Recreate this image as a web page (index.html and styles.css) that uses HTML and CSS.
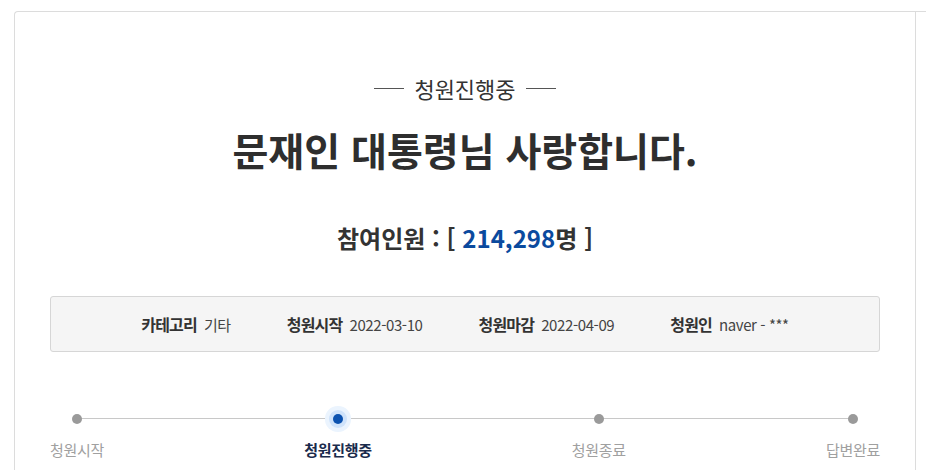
FILE: index.html
```html
<!DOCTYPE html>
<html lang="ko">
<head>
<meta charset="utf-8">
<title>청원 상세</title>
<link rel="stylesheet" href="styles.css">
</head>
<body>
<div class="card">
  <div class="main">
    <div class="status"><span class="dash"></span><span class="status-text">청원진행중</span><span class="dash"></span></div>
    <h1 class="title">문재인 대통령님 사랑합니다.</h1>
    <div class="count">참여인원 : [ <span class="num">214,298</span>명 ]</div>
    <ul class="info">
      <li><span class="label">카테고리</span><span class="value">기타</span></li>
      <li><span class="label">청원시작</span><span class="value">2022-03-10</span></li>
      <li><span class="label">청원마감</span><span class="value">2022-04-09</span></li>
      <li><span class="label">청원인</span><span class="value">naver - ***</span></li>
    </ul>
    <ol class="steps">
      <li class="step"><span class="dot"></span><span class="step-label">청원시작</span></li>
      <li class="step active"><span class="dot"></span><span class="step-label">청원진행중</span></li>
      <li class="step"><span class="dot"></span><span class="step-label">청원종료</span></li>
      <li class="step"><span class="dot"></span><span class="step-label">답변완료</span></li>
    </ol>
  </div>
</div>
</body>
</html>
```
FILE: styles.css
```css
html, body {
  margin: 0;
  padding: 0;
  background: #fff;
  overflow: hidden;
}
body {
  font-family: "Noto Sans CJK KR", "Noto Sans", sans-serif;
  color: #333;
}
.card {
  margin: 11px 0 0 14px;
  width: 1100px;
  border-top: 1px solid #dcdcdc;
  border-left: 1px solid #dcdcdc;
  border-top-left-radius: 4px;
}
.main {
  width: 830px;
  padding: 64px 35px 40px 35px;
  border-right: 1px solid #dcdcdc;
}
.status {
  display: flex;
  justify-content: center;
  align-items: center;
  gap: 10px;
  height: 24px;
}
.status-text {
  font-size: 22px;
  line-height: 24px;
  color: #333;
}
.dash {
  width: 30px;
  height: 1px;
  background: #555;
}
.title {
  margin: 26px 0 0;
  font-size: 39px;
  line-height: 46px;
  font-weight: 700;
  text-align: center;
  color: #2e2e2e;
}
.count {
  margin-top: 50px;
  font-size: 24px;
  line-height: 32px;
  font-weight: 700;
  text-align: center;
  color: #333;
}
.num {
  color: #0b4a9e;
}
.info {
  list-style: none;
  margin: 42px 0 0;
  padding: 0;
  height: 54px;
  background: #f5f5f5;
  border: 1px solid #d6d6d6;
  border-radius: 3px;
  display: flex;
  justify-content: center;
  align-items: center;
  gap: 56px;
}
.info li {
  display: flex;
  align-items: center;
  gap: 7px;
}
.label {
  font-size: 16px;
  font-weight: 700;
  color: #333;
  letter-spacing: -0.8px;
}
.value {
  font-size: 15px;
  color: #444;
  letter-spacing: -0.4px;
}
.steps {
  list-style: none;
  margin: 62px 0 0;
  padding: 0;
  display: flex;
  justify-content: space-between;
  position: relative;
}
.steps::before {
  content: "";
  position: absolute;
  top: 4px;
  left: 26px;
  right: 28px;
  height: 1px;
  background: #c8c8c8;
}
.step {
  display: flex;
  flex-direction: column;
  align-items: center;
  position: relative;
}
.dot {
  width: 10px;
  height: 10px;
  border-radius: 50%;
  background: #9a9a9a;
}
.step.active .dot {
  background: #0b52b0;
  box-shadow: 0 0 0 4px #cfe3fb, 0 0 0 8px #ebf4fe;
}
.step-label {
  margin-top: 16px;
  font-size: 15px;
  line-height: 20px;
  color: #a0a0a0;
  letter-spacing: -0.3px;
}
.step.active .step-label {
  font-weight: 700;
  color: #1a2b4c;
}
```
